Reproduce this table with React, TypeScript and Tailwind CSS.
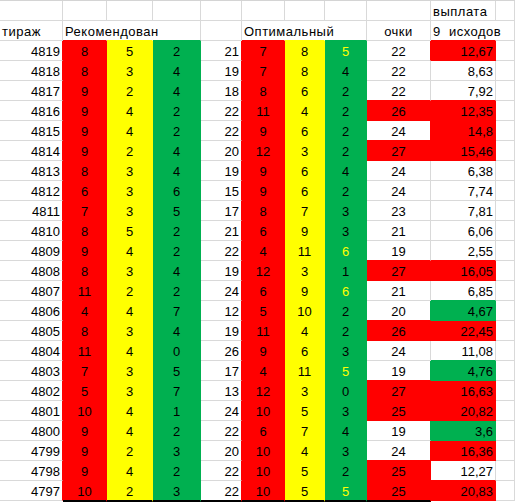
import React from 'react';

type Fill = 'r' | 'y' | 'g' | null;
type Align = 'l' | 'c' | 'r';

interface CellDef {
  text?: string;
  fill: Fill;
  align: Align;
  yellowText?: boolean;
  noRight?: boolean;
  label?: boolean;
}

// tiraz, recommended (3), sum, optimal (3), yellow last, points, points fill, payout, payout fill
type Row = [string, number, number, number, number, number, number, number, boolean, number, Fill, string, Fill];

const data: Row[] = [
  ['4819', 8, 5, 2, 21, 7, 8, 5, true, 22, null, '12,67', 'r'],
  ['4818', 8, 3, 4, 19, 7, 8, 4, false, 22, null, '8,63', null],
  ['4817', 9, 2, 4, 18, 8, 6, 2, false, 22, null, '7,92', null],
  ['4816', 9, 4, 2, 22, 11, 4, 2, false, 26, 'r', '12,35', 'r'],
  ['4815', 9, 4, 2, 22, 9, 6, 2, false, 24, null, '14,8', 'r'],
  ['4814', 9, 2, 4, 20, 12, 3, 2, false, 27, 'r', '15,46', 'r'],
  ['4813', 8, 3, 4, 19, 9, 6, 4, false, 24, null, '6,38', null],
  ['4812', 6, 3, 6, 15, 9, 6, 2, false, 24, null, '7,74', null],
  ['4811', 7, 3, 5, 17, 8, 7, 3, false, 23, null, '7,81', null],
  ['4810', 8, 5, 2, 21, 6, 9, 3, false, 21, null, '6,06', null],
  ['4809', 9, 4, 2, 22, 4, 11, 6, true, 19, null, '2,55', null],
  ['4808', 8, 3, 4, 19, 12, 3, 1, false, 27, 'r', '16,05', 'r'],
  ['4807', 11, 2, 2, 24, 6, 9, 6, true, 21, null, '6,85', null],
  ['4806', 4, 4, 7, 12, 5, 10, 2, false, 20, null, '4,67', 'g'],
  ['4805', 8, 3, 4, 19, 11, 4, 2, false, 26, 'r', '22,45', 'r'],
  ['4804', 11, 4, 0, 26, 9, 6, 3, false, 24, null, '11,08', null],
  ['4803', 7, 3, 5, 17, 4, 11, 5, true, 19, null, '4,76', 'g'],
  ['4802', 5, 3, 7, 13, 12, 3, 0, false, 27, 'r', '16,63', 'r'],
  ['4801', 10, 4, 1, 24, 10, 5, 3, false, 25, 'r', '20,82', 'r'],
  ['4800', 9, 4, 2, 22, 6, 7, 4, false, 19, null, '3,6', 'g'],
  ['4799', 9, 2, 3, 20, 10, 4, 3, false, 24, null, '16,36', 'r'],
  ['4798', 9, 4, 2, 22, 10, 5, 2, false, 25, 'r', '12,27', null],
  ['4797', 10, 2, 3, 22, 10, 5, 5, true, 25, 'r', '20,83', 'r'],
];

const bgCls = { r: 'bg-[#ff0000]', y: 'bg-[#ffff00]', g: 'bg-[#00b050]' };
const brCls = {
  r: 'border-r-[#ff0000]',
  y: 'border-r-[#ffff00]',
  g: 'border-r-[#00b050]',
  gray: 'border-r-[#d9d9d9]',
  none: 'border-r-transparent',
};
const bbCls = {
  r: 'border-b-[#ff0000]',
  y: 'border-b-[#ffff00]',
  g: 'border-b-[#00b050]',
  gray: 'border-b-[#d9d9d9]',
};
const alignCls = { l: 'text-left', c: 'text-center', r: 'text-right' };

const empty = (n: number): CellDef[] => Array.from({ length: n }, () => ({ fill: null, align: 'l' as Align }));

const header1: CellDef[] = empty(11);
header1[9] = { text: 'выплата', fill: null, align: 'l', label: true };

const header2: CellDef[] = [
  { text: 'тираж', fill: null, align: 'l', label: true },
  { text: 'Рекомендован', fill: null, align: 'l', noRight: true, label: true },
  { fill: null, align: 'l', noRight: true },
  { fill: null, align: 'l' },
  { fill: null, align: 'l' },
  { text: 'Оптимальный', fill: null, align: 'l', noRight: true, label: true },
  { fill: null, align: 'l', noRight: true },
  { fill: null, align: 'l' },
  { text: 'очки', fill: null, align: 'c', label: true },
  { text: '9  исходов', fill: null, align: 'l', noRight: true, label: true },
  { fill: null, align: 'l' },
];

const body: CellDef[][] = data.map((d) => [
  { text: d[0], fill: null, align: 'r' },
  { text: String(d[1]), fill: 'r', align: 'c' },
  { text: String(d[2]), fill: 'y', align: 'c' },
  { text: String(d[3]), fill: 'g', align: 'c' },
  { text: String(d[4]), fill: null, align: 'r' },
  { text: String(d[5]), fill: 'r', align: 'c' },
  { text: String(d[6]), fill: 'y', align: 'c' },
  { text: String(d[7]), fill: 'g', align: 'c', yellowText: d[8] },
  { text: String(d[9]), fill: d[10], align: 'c' },
  { text: d[11], fill: d[12], align: 'r' },
  { fill: null, align: 'l' },
]);

const sheet: CellDef[][] = [header1, header2, ...body];

export default function App() {
  const last = sheet.length - 1;

  return (
    <div className="w-[515px] h-[502px] overflow-hidden bg-white border-t border-[#d4d4d4] font-['Liberation_Sans',Arial,sans-serif] text-[13px] text-black">
      <div className="grid grid-cols-[63px_44px_46px_48px_41px_43px_40px_42px_64px_65px_19px] items-start">
        {sheet.map((row, r) =>
          row.map((cell, c) => {
            const right = row[c + 1];
            const below = r < last ? sheet[r + 1][c] : null;
            const rightKey = cell.fill ?? right?.fill ?? (cell.noRight ? 'none' : 'gray');
            const bottomKey = cell.fill ?? below?.fill ?? 'gray';
            const thick = r === last && c >= 1 && c <= 8;
            return (
              <div
                key={`${r}-${c}`}
                className={[
                  'border-r pt-[3px] px-[2px] leading-[15px] whitespace-nowrap',
                  thick ? 'h-[21px] border-b-2 border-b-black' : 'h-[20px] border-b ' + bbCls[bottomKey],
                  brCls[rightKey],
                  cell.fill ? bgCls[cell.fill] : '',
                  alignCls[cell.align],
                  cell.yellowText ? 'text-[#ffff00]' : '',
                  cell.label ? 'tracking-[0.5px]' : '',
                ].join(' ')}
              >
                {cell.text && <span className="whitespace-pre">{cell.text}</span>}
              </div>
            );
          }),
        )}
      </div>
    </div>
  );
}
